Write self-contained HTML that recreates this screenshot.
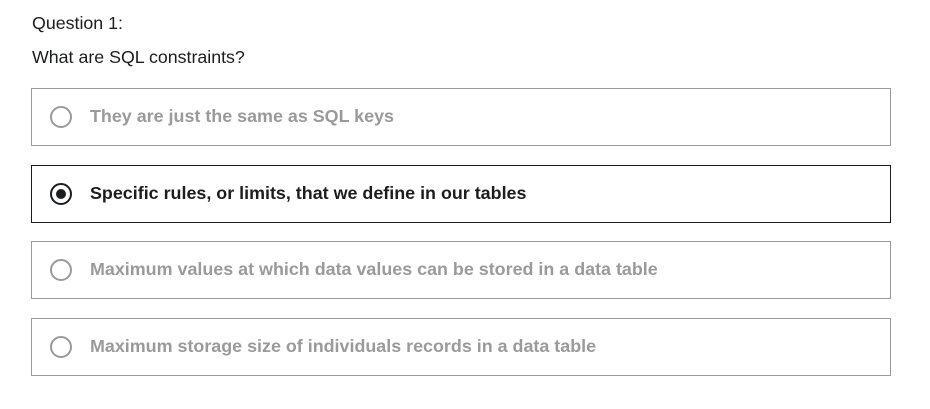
<!DOCTYPE html>
<html><head><style>
body{margin:0;width:930px;height:409px;background:#fff;font-family:"Liberation Sans",sans-serif;position:relative;overflow:hidden}
.t{position:absolute;left:32px;font-size:17.8px;color:#1c1d1f}
.o{position:absolute;left:31px;width:858px;height:56px;border:1px solid #9a9a9a;box-sizing:content-box}
.o.s{border-color:#1c1d1f}
.c{position:absolute;left:18px;top:17px;width:18px;height:18px;border:2px solid #9a9a9a;border-radius:50%}
.s .c{border-color:#1c1d1f}
.s .c::after{content:"";position:absolute;left:4px;top:4px;width:10px;height:10px;border-radius:50%;background:#1c1d1f}
.l{position:absolute;left:58px;top:17px;font-size:17.9px;font-weight:bold;color:#9a9a9a;white-space:nowrap}
.s .l{color:#1c1d1f}
</style></head><body>
<div class="t" style="top:13px">Question 1:</div>
<div class="t" style="top:47px">What are SQL constraints?</div>
<div class="o" style="top:88px"><div class="c"></div><div class="l">They are just the same as SQL keys</div></div>
<div class="o s" style="top:165px"><div class="c"></div><div class="l">Specific rules, or limits, that we define in our tables</div></div>
<div class="o" style="top:241px"><div class="c"></div><div class="l">Maximum values at which data values can be stored in a data table</div></div>
<div class="o" style="top:318px"><div class="c"></div><div class="l">Maximum storage size of individuals records in a data table</div></div>
</body></html>
